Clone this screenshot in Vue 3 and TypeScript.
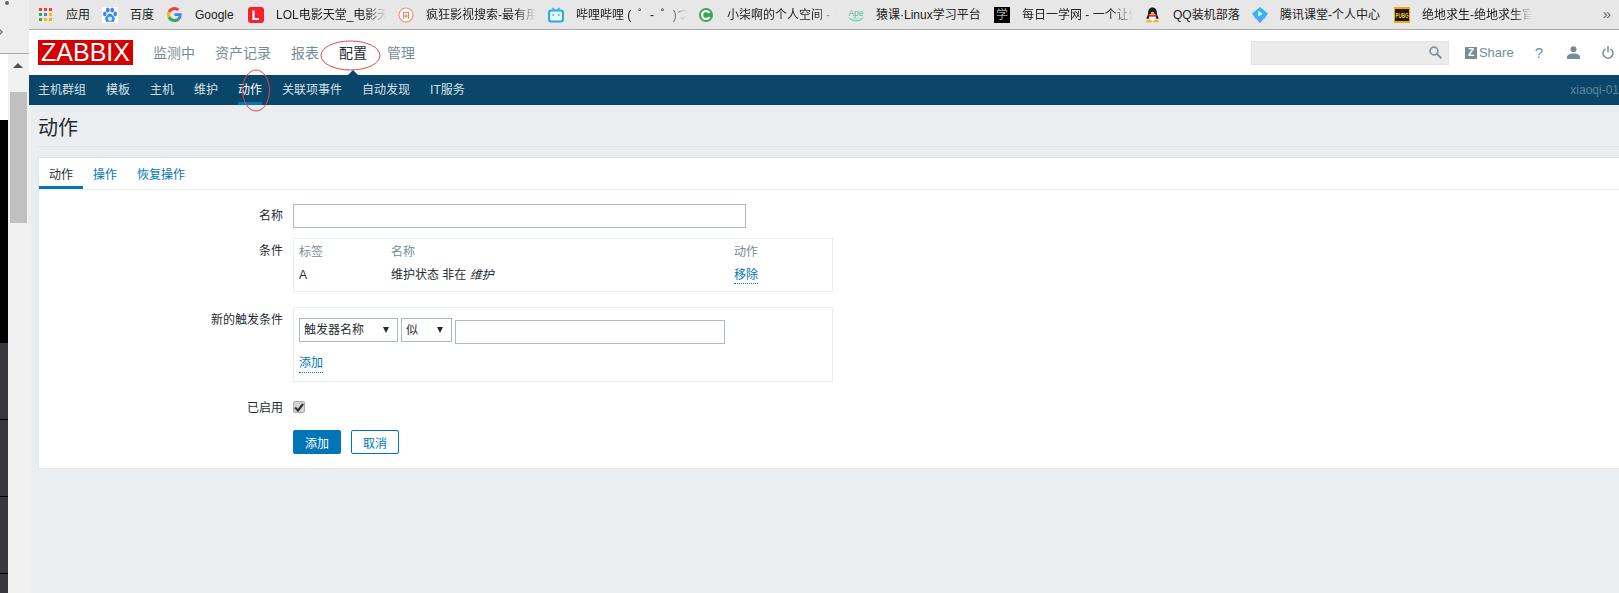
<script setup lang="ts">
const bookmarks = [
  { icon: "grid", label: "应用", width: 24 },
  { icon: "paw", label: "百度", width: 25 },
  { icon: "google", label: "Google", width: 41 },
  { icon: "lol", label: "LOL电影天堂_电影天堂网", width: 110, fade: true },
  { icon: "crazy", label: "疯狂影视搜索-最有用的影视", width: 110, fade: true },
  { icon: "bili", label: "哔哩哔哩 (\u00a0\u00a0゜-\u00a0\u00a0゜)つロ 干杯~", width: 111, fade: true },
  { icon: "c", label: "小柒啊的个人空间 - 博客园", width: 109, fade: true },
  { icon: "ape", label: "猿课·Linux学习平台", width: 106 },
  { icon: "xue", label: "每日一学网 - 一个让你每日", width: 111, fade: true },
  { icon: "qq", label: "QQ装机部落", width: 67 },
  { icon: "tencent", label: "腾讯课堂-个人中心", width: 102 },
  { icon: "pubg", label: "绝地求生-绝地求生官网", width: 110, fade: true },
];

const gridColors = [
  "#ea4335", "#ea4335", "#ea4335",
  "#34a853", "#4285f4", "#fbbc05",
  "#34a853", "#fbbc05", "#fbac05",
];

const mainMenu = ["监测中", "资产记录", "报表", "配置", "管理"];
const subMenu = ["主机群组", "模板", "主机", "维护", "动作", "关联项事件", "自动发现", "IT服务"];
const tabs = ["动作", "操作", "恢复操作"];
</script>

<template>
  <div class="screen">
    <aside class="side">
      <div class="side__top">
        <span class="side__dot"></span>
        <svg class="side__chevron" width="6" height="8" viewBox="0 0 6 8">
          <path d="M0 1l3 3-3 3" fill="none" stroke="#777" stroke-width="1.5" />
        </svg>
      </div>
      <div class="side__body">
        <div class="side__strip">
          <div class="strip__white"></div>
          <div class="strip__black"></div>
          <div class="strip__gray"></div>
          <div class="strip__gray"></div>
          <div class="strip__gray"></div>
          <div class="strip__gray"></div>
        </div>
        <div class="scrollbar">
          <span class="scrollbar__arrow"></span>
          <div class="scrollbar__thumb"></div>
        </div>
      </div>
    </aside>

    <div class="main">
      <div class="bookmarks">
        <div v-for="b in bookmarks" :key="b.label" class="bookmark">
          <span class="bookmark__icon">
            <span v-if="b.icon === 'grid'" class="icon-grid">
              <i v-for="(c, i) in gridColors" :key="i" :style="{ background: c }"></i>
            </span>
            <svg v-else-if="b.icon === 'paw'" width="16" height="16" viewBox="0 0 16 16">
              <rect width="16" height="16" fill="#fff" />
              <ellipse cx="2.800" cy="7" rx="1.800" ry="2.400" fill="#3a86f0" />
              <ellipse cx="5.800" cy="3" rx="1.900" ry="2.500" fill="#3a86f0" />
              <ellipse cx="10.200" cy="3" rx="1.900" ry="2.500" fill="#3a86f0" />
              <ellipse cx="13.200" cy="7" rx="1.800" ry="2.400" fill="#3a86f0" />
              <path d="M8 6.500c-2 0-2.400 2-4 3.200C2.500 11 3.300 15.500 6 15c1-.2 3-.2 4 0 2.700.5 3.500-4 2-5.300C10.400 8.500 10 6.500 8 6.500z" fill="#3a86f0" />
              <circle cx="8" cy="11.800" r="2.300" fill="#cfe2fb" />
            </svg>
            <svg v-else-if="b.icon === 'google'" width="15" height="15" viewBox="0 0 48 48">
              <path fill="#ea4335" d="M24 9.500c3.500 0 6.700 1.300 9.100 3.500l6.800-6.800C35.800 2.400 30.200 0 24 0 14.600 0 6.500 5.400 2.600 13.200l7.900 6.100C12.400 13.700 17.700 9.500 24 9.500z" />
              <path fill="#4285f4" d="M46.900 24.500c0-1.600-.1-3.100-.4-4.500H24v9h12.900c-.6 3-2.200 5.500-4.800 7.200l7.700 6c4.500-4.200 7.100-10.300 7.100-17.700z" />
              <path fill="#fbbc05" d="M10.500 28.700c-.5-1.500-.8-3-.8-4.700s.3-3.200.8-4.700l-7.900-6.100C.900 16.500 0 20.100 0 24s.9 7.500 2.600 10.800l7.900-6.100z" />
              <path fill="#34a853" d="M24 48c6.500 0 11.900-2.100 15.800-5.800l-7.700-6c-2.100 1.400-4.900 2.300-8.100 2.300-6.300 0-11.600-4.200-13.500-9.800l-7.900 6.100C6.500 42.600 14.600 48 24 48z" />
            </svg>
            <svg v-else-if="b.icon === 'lol'" width="16" height="16" viewBox="0 0 16 16">
              <rect width="16" height="16" rx="3" fill="#f5222d" />
              <path d="M5.500 3.500v8.500h5.500" fill="none" stroke="#fff" stroke-width="2.200" />
            </svg>
            <svg v-else-if="b.icon === 'crazy'" width="16" height="16" viewBox="0 0 16 16">
              <circle cx="8" cy="8" r="7" fill="#fff" stroke="#e9967a" stroke-width="1.200" />
              <path d="M5 5.500h6M5.500 5.500v6M10.500 5.500v6M7 8h2v2H7z" fill="none" stroke="#e9805a" />
            </svg>
            <svg v-else-if="b.icon === 'bili'" width="16" height="16" viewBox="0 0 16 16">
              <path d="M4.500 .8l2 2.500M11.500 .8l-2 2.500" stroke="#23ade5" stroke-width="1.300" />
              <rect x="1" y="3.500" width="14" height="11" rx="2" fill="#e7f6fc" stroke="#23ade5" stroke-width="2" />
              <path d="M4.500 8h1.500M10 8h1.500" stroke="#23ade5" stroke-width="1.500" />
            </svg>
            <svg v-else-if="b.icon === 'c'" width="14" height="14" viewBox="0 0 14 14">
              <circle cx="7" cy="7" r="7" fill="#3aa757" />
              <path d="M10.500 5A4 4 0 1 0 10.500 9" fill="none" stroke="#fff" stroke-width="2.200" />
            </svg>
            <svg v-else-if="b.icon === 'ape'" width="16" height="16" viewBox="0 0 16 16">
              <path d="M1 10.500c2 4.500 12 4.500 14 0" fill="#bfe8d8" stroke="#6cc9a4" stroke-width="1" />
              <text x="8" y="9" text-anchor="middle" font-size="8.500" fill="#58b995" font-family="Liberation Sans">Ape</text>
            </svg>
            <span v-else-if="b.icon === 'xue'" class="icon-xue">学</span>
            <svg v-else-if="b.icon === 'qq'" width="15" height="16" viewBox="0 0 15 16">
              <path d="M3 7.500C3 2 5 .5 7.500 .5S12 2 12 7.500l1.500 3.500c0 1.500-1 1-1.500.5L7.500 13 3 11.500c-.5.5-1.500 1-1.500-.5z" fill="#1a1a1a" />
              <ellipse cx="7.500" cy="9.800" rx="3.600" ry="3.600" fill="#fff" />
              <path d="M3.500 7.500h8l-.5 2.300h-7z" fill="#e6352c" />
              <ellipse cx="7.500" cy="5.600" rx="1.600" ry=".9" fill="#fbbc05" />
              <ellipse cx="4" cy="14.300" rx="3" ry="1.300" fill="#f7b51d" />
              <ellipse cx="11" cy="14.300" rx="3" ry="1.300" fill="#f7b51d" />
            </svg>
            <svg v-else-if="b.icon === 'tencent'" width="16" height="16" viewBox="0 0 16 16">
              <path d="M8 0l8 6.500L8 16 0 6.500z" fill="#34b7ef" />
              <path d="M0 6.500L8 16l8-9.500-3.500 5.500h-9z" fill="#7d8bf0" />
              <path d="M6.300 4l4.200 2.800-4.200 2.800z" fill="#fff" />
            </svg>
            <svg v-else width="16" height="16" viewBox="0 0 16 16">
              <rect width="16" height="16" fill="#f6a800" />
              <rect x="1" y="2" width="14" height="12" fill="#1d1a10" />
              <text x="8" y="11" text-anchor="middle" font-size="8" font-weight="700" fill="#f6c342" textLength="13" lengthAdjust="spacingAndGlyphs" font-family="Liberation Sans">PUBG</text>
            </svg>
          </span>
          <span class="bookmark__text" :class="{ 'bookmark__text--fade': b.fade }" :style="{ width: b.width + 'px' }">{{ b.label }}</span>
        </div>
        <span class="bookmarks__more">»</span>
      </div>

      <header class="topbar">
        <div class="logo">ZABBIX</div>
        <nav class="mainmenu">
          <a
            v-for="m in mainMenu"
            :key="m"
            class="mainmenu__item"
            :class="{ 'mainmenu__item--active': m === '配置' }"
          >{{ m }}</a>
        </nav>
        <div class="tools">
          <div class="search">
            <svg width="13" height="13" viewBox="0 0 13 13">
              <circle cx="5" cy="5" r="3.900" fill="none" stroke="#7f929c" stroke-width="1.700" />
              <path d="M8 8l4.300 4.300" stroke="#7f929c" stroke-width="2" />
            </svg>
          </div>
          <a class="share"><span class="share__z">Z</span>Share</a>
          <span class="help">?</span>
          <svg class="user" width="13" height="13" viewBox="0 0 13 13">
            <circle cx="6.500" cy="3.300" r="3" fill="#768d99" />
            <path d="M0 13v-2c0-2 3-3.500 6.500-3.500S13 9 13 11v2z" fill="#768d99" />
          </svg>
          <svg class="power" width="12" height="13" viewBox="0 0 12 13">
            <path d="M3.500 2.800a5 5 0 1 0 5 0" fill="none" stroke="#768d99" stroke-width="1.500" />
            <path d="M6 0v6.500" stroke="#768d99" stroke-width="1.500" />
          </svg>
        </div>
      </header>

      <nav class="submenu">
        <a
          v-for="s in subMenu"
          :key="s"
          class="submenu__item"
          :class="{ 'submenu__item--active': s === '动作' }"
        >{{ s }}</a>
        <span class="submenu__host">xiaoqi-01</span>
      </nav>

      <main class="content">
        <h1 class="title">动作</h1>
        <section class="card">
          <div class="tabs">
            <a
              v-for="(t, i) in tabs"
              :key="t"
              class="tab"
              :class="{ 'tab--active': i === 0 }"
            >{{ t }}</a>
          </div>
          <div class="form">
            <label class="form__label form__label--input">名称</label>
            <div class="input input--name"></div>

            <label class="form__label form__label--box">条件</label>
            <div class="box box--cond">
              <div class="cond cond--head">
                <span>标签</span><span>名称</span><span>动作</span>
              </div>
              <div class="cond">
                <span>A</span>
                <span>维护状态 非在 <em>维护</em></span>
                <span><a class="link">移除</a></span>
              </div>
            </div>

            <label class="form__label form__label--box">新的触发条件</label>
            <div class="box box--new">
              <div class="filter">
                <div class="select select--wide">触发器名称<i class="select__arrow"></i></div>
                <div class="select select--narrow">似<i class="select__arrow"></i></div>
                <div class="input input--value"></div>
              </div>
              <a class="link link--add">添加</a>
            </div>

            <label class="form__label form__label--check">已启用</label>
            <div class="check">
              <svg width="10" height="9" viewBox="0 0 10 9">
                <path d="M1 4.500l3 3 5-6.500" fill="none" stroke="#333" stroke-width="2.200" />
              </svg>
            </div>

            <span></span>
            <div class="actions">
              <button class="btn btn--primary" type="button">添加</button>
              <button class="btn" type="button">取消</button>
            </div>
          </div>
        </section>
      </main>
    </div>

    <svg class="notes" width="1619" height="593" viewBox="0 0 1619 593">
      <ellipse cx="350.500" cy="55.500" rx="29.500" ry="14.500" />
      <ellipse cx="256" cy="90.500" rx="13.500" ry="20.500" />
    </svg>
  </div>
</template>

<style>
html,
body {
  margin: 0;
  overflow: hidden;
}
</style>

<style scoped>
.screen {
  position: relative;
  display: flex;
  width: 1619px;
  height: 593px;
  overflow: hidden;
  background: #ebeef0;
  font-family: "Liberation Sans", "Noto Sans CJK SC", sans-serif;
  font-size: 12px;
}

.side {
  width: 29px;
  flex: none;
  display: flex;
  flex-direction: column;
}

.side__top {
  position: relative;
  height: 54px;
  flex: none;
  box-sizing: border-box;
  background: #ededed;
  border-bottom: 1px solid #a9a9a9;
}

.side__dot {
  position: absolute;
  left: 5px;
  top: 1px;
  width: 4px;
  height: 4px;
  border-radius: 50%;
  background: #666;
}

.side__chevron {
  position: absolute;
  left: -1px;
  top: 28px;
}

.side__body {
  flex: 1;
  display: flex;
  min-height: 0;
  overflow: hidden;
}

.side__strip {
  width: 8px;
  display: flex;
  flex-direction: column;
}

.strip__white {
  height: 66px;
  flex: none;
  background: #fff;
}

.strip__black {
  height: 223px;
  flex: none;
  background: #000;
}

.strip__gray {
  height: 76px;
  flex: none;
  background: #36383b;
  border-bottom: 1px solid #000;
}

.scrollbar {
  position: relative;
  flex: 1;
  background: #f1f1f1;
}

.scrollbar__arrow {
  position: absolute;
  left: 5px;
  top: 9px;
  border-left: 5px solid transparent;
  border-right: 5px solid transparent;
  border-bottom: 5px solid #505050;
}

.scrollbar__thumb {
  position: absolute;
  left: 2px;
  top: 38px;
  width: 17px;
  height: 131px;
  background: #c0c0c0;
}

.main {
  flex: 1;
  min-width: 0;
  display: flex;
  flex-direction: column;
}

.bookmarks {
  height: 30px;
  flex: none;
  box-sizing: border-box;
  display: flex;
  align-items: center;
  gap: 12px;
  padding-left: 9px;
  background: #e7e7e7;
  border-bottom: 1px solid #a9a9a9;
  position: relative;
}

.bookmark {
  display: flex;
  align-items: center;
  flex: none;
}

.bookmark__icon {
  width: 28px;
  height: 16px;
  flex: none;
  display: flex;
  align-items: center;
}

.bookmark__text {
  display: block;
  overflow: hidden;
  white-space: nowrap;
  color: #222;
  font-size: 12px;
  line-height: 16px;
}

.bookmark__text--fade {
  -webkit-mask-image: linear-gradient(to right, #000 82%, transparent 100%);
  mask-image: linear-gradient(to right, #000 82%, transparent 100%);
}

.bookmarks__more {
  position: absolute;
  right: 8px;
  top: 4px;
  color: #666;
  font-size: 15px;
  line-height: 20px;
}

.icon-grid {
  display: grid;
  grid-template-columns: repeat(3, 3px);
  grid-auto-rows: 3px;
  gap: 2px;
  padding-left: 1px;
}

.icon-xue {
  width: 16px;
  height: 16px;
  background: #000;
  color: #aaa;
  font-size: 12px;
  line-height: 16px;
  text-align: center;
}

.topbar {
  height: 45px;
  flex: none;
  display: flex;
  align-items: center;
  padding-left: 9px;
  background: #fff;
}

.logo {
  width: 95px;
  height: 25px;
  flex: none;
  background: #d40000;
  color: #fff;
  font-size: 25px;
  line-height: 25px;
  text-align: center;
}

.mainmenu {
  position: relative;
  display: flex;
  gap: 20px;
  margin-left: 20px;
}

.mainmenu__item {
  color: #768d99;
  font-size: 14px;
  line-height: 20px;
}

.mainmenu__item--active {
  position: relative;
  color: #1f2c33;
}

.mainmenu__item--active::after {
  content: "";
  position: absolute;
  left: 6px;
  top: 27px;
  border-left: 8px solid transparent;
  border-right: 8px solid transparent;
  border-bottom: 8px solid #0a466a;
}

.tools {
  margin-left: auto;
  display: flex;
  align-items: center;
  padding-right: 5px;
}

.search {
  width: 198px;
  height: 24px;
  box-sizing: border-box;
  display: flex;
  align-items: center;
  justify-content: flex-end;
  padding-right: 6px;
  background: #ebebeb;
  border: 1px solid #e3e3e3;
}

.share {
  display: flex;
  align-items: center;
  margin-left: 16px;
  color: #768d99;
  font-size: 13px;
}

.share__z {
  width: 12px;
  height: 12px;
  margin-right: 2px;
  background: #768d99;
  color: #fff;
  font-size: 10px;
  font-weight: 700;
  line-height: 12px;
  text-align: center;
}

.help {
  margin-left: 21px;
  color: #768d99;
  font-size: 15px;
}

.user {
  margin-left: 24px;
}

.power {
  margin-left: 22px;
}

.submenu {
  height: 30px;
  flex: none;
  display: flex;
  align-items: center;
  gap: 20px;
  padding-left: 9px;
  background: #0a466a;
}

.submenu__item {
  position: relative;
  color: #d5e0e6;
  font-size: 12px;
  line-height: 30px;
}

.submenu__item--active {
  color: #fff;
}

.submenu__item--active::after {
  content: "";
  position: absolute;
  left: 0;
  right: 0;
  bottom: 0;
  height: 3px;
  background: #0275b8;
}

.submenu__host {
  margin-left: auto;
  color: #5f8499;
  font-size: 12px;
}

.content {
  flex: 1;
  min-height: 0;
  padding-left: 9px;
}

.title {
  height: 42px;
  box-sizing: border-box;
  margin: 0 0 10px;
  padding-top: 11px;
  border-bottom: 1px solid #dfe4e7;
  color: #1f2c33;
  font-size: 20px;
  font-weight: 400;
  line-height: 24px;
}

.card {
  margin-right: -10px;
  background: #fff;
  border: 1px solid #dfe4e7;
  padding-bottom: 14px;
}

.tabs {
  height: 32px;
  box-sizing: border-box;
  display: flex;
  border-bottom: 1px solid #ebeef0;
}

.tab {
  height: 31px;
  box-sizing: border-box;
  padding: 3px 10px 0;
  color: #0275b8;
  font-size: 12px;
  line-height: 28px;
}

.tab--active {
  color: #1f2c33;
  border-bottom: 3px solid #0275b8;
}

.form {
  display: grid;
  grid-template-columns: 244px 1fr;
  column-gap: 10px;
  padding-top: 14px;
  color: #1f2c33;
}

.form__label {
  text-align: right;
  line-height: 16px;
}

.form__label--input {
  padding-top: 4px;
}

.form__label--box {
  padding-top: 5px;
}

.form__label--check {
  line-height: 14px;
}

.input {
  height: 24px;
  box-sizing: border-box;
  background: #fff;
  border: 1px solid #acbbc2;
}

.input--name {
  width: 453px;
  margin-bottom: 10px;
}

.input--value {
  width: 270px;
  margin-top: 2px;
  margin-left: 3px;
}

.box {
  width: 540px;
  box-sizing: border-box;
  border: 1px solid #ebeef0;
}

.box--cond {
  height: 54px;
  margin-bottom: 15px;
  padding: 5px;
}

.box--new {
  height: 75px;
  margin-bottom: 19px;
  padding: 10px 5px 0;
}

.cond {
  display: grid;
  grid-template-columns: 92px 343px 1fr;
  line-height: 16px;
  padding-bottom: 7px;
}

.cond em {
  font-style: italic;
}

.cond--head {
  color: #768d99;
}

.link {
  color: #0275b8;
  border-bottom: 1px dotted #0275b8;
  padding-bottom: 1px;
}

.link--add {
  display: inline-block;
  margin-top: 12px;
  line-height: 15px;
}

.filter {
  display: flex;
  align-items: flex-start;
}

.select {
  position: relative;
  height: 24px;
  box-sizing: border-box;
  padding-left: 4px;
  border: 1px solid #acbbc2;
  line-height: 22px;
}

.select--wide {
  width: 99px;
  margin-right: 3px;
}

.select--narrow {
  width: 51px;
}

.select__arrow {
  position: absolute;
  right: 8px;
  top: 8px;
  border-left: 3.500px solid transparent;
  border-right: 3.500px solid transparent;
  border-top: 6px solid #1f2c33;
}

.check {
  width: 12px;
  height: 12px;
  box-sizing: border-box;
  display: flex;
  align-items: center;
  justify-content: center;
  margin-bottom: 17px;
  background: #d6d6d6;
  border: 1px solid #aaa;
  border-radius: 2px;
}

.actions {
  display: flex;
  gap: 10px;
}

.btn {
  width: 48px;
  height: 24px;
  box-sizing: border-box;
  padding: 0;
  background: #fff;
  border: 1px solid #0275b8;
  border-radius: 2px;
  color: #0275b8;
  font: inherit;
}

.btn--primary {
  background: #0275b8;
  color: #fff;
}

.notes {
  position: absolute;
  left: 0;
  top: 0;
  pointer-events: none;
}

.notes ellipse {
  fill: none;
  stroke: #e2474c;
  stroke-width: 1;
}
</style>
